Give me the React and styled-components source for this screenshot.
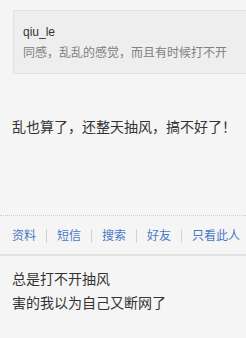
import React from "react";
import styled, { createGlobalStyle } from "styled-components";

const Global = createGlobalStyle`
  html, body { margin: 0; padding: 0; background: #f5f5f5; overflow: hidden; }
  body { font-family: "Liberation Sans", "Noto Sans CJK SC", sans-serif; color: #333; }
`;

const Page = styled.div`
  width: 246px;
  padding-top: 10px;
`;

const Quote = styled.div`
  margin-left: 13px;
  background: #eeeeee;
  border: 1px solid #e2e2e2;
  border-right: none;
  padding: 11px 9px 9px;
  font-size: 12px;
  line-height: 21px;
`;

const QuoteName = styled.div`
  color: #333;
`;

const QuoteText = styled.div`
  color: #808080;
  white-space: nowrap;
`;

const PostBody = styled.div`
  padding: 41px 12px 0;
  height: 100px;
  font-size: 14px;
  line-height: 24px;
  color: #333;
  white-space: nowrap;
`;

const Divider = styled.div`
  border-top: 1px dotted #cfcfcf;
`;

const Links = styled.div`
  display: flex;
  align-items: center;
  padding: 13px 0 11px 12px;
  border-bottom: 2px solid #e2e2e2;
`;

const Link = styled.a`
  flex-shrink: 0;
  white-space: nowrap;
  font-size: 12px;
  line-height: 14px;
  color: #4a78c6;
  text-decoration: none;
  padding: 0 10px;
  border-left: 1px solid #d2d2d2;
  height: 14px;
  display: flex;
  align-items: center;
  &:first-child { padding-left: 0; border-left: none; }
`;

const Reply = styled.div`
  padding: 11px 12px 0;
  font-size: 14px;
  line-height: 24px;
  color: #333;
`;

export default function App() {
  const links = ["资料", "短信", "搜索", "好友", "只看此人"];
  return (
    <Page>
      <Global />
      <Quote>
        <QuoteName>qiu_le</QuoteName>
        <QuoteText>同感，乱乱的感觉，而且有时候打不开</QuoteText>
      </Quote>
      <PostBody>乱也算了，还整天抽风，搞不好了！</PostBody>
      <Divider />
      <Links>
        {links.map((l) => (
          <Link key={l} href="#">{l}</Link>
        ))}
      </Links>
      <Reply>
        <div>总是打不开抽风</div>
        <div>害的我以为自己又断网了</div>
      </Reply>
    </Page>
  );
}
